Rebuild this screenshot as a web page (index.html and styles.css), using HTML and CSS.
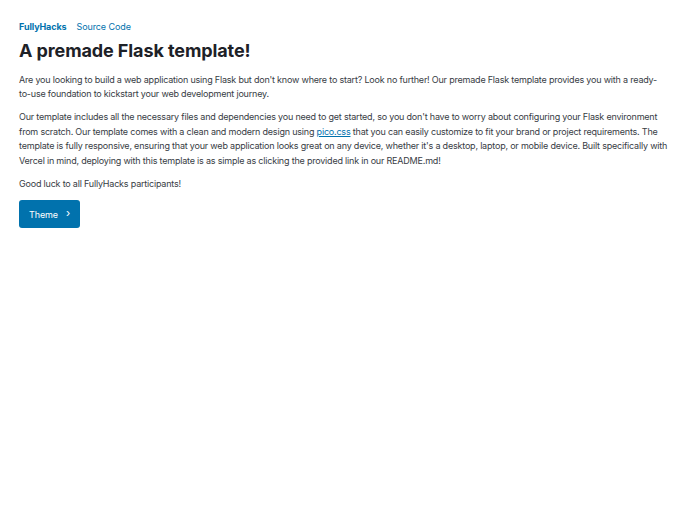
FILE: index.html
```html
<!DOCTYPE html>
<html lang="en">
<head>
<meta charset="utf-8">
<title>FullyHacks Flask Template</title>
<link rel="stylesheet" href="styles.css">
</head>
<body>
<main class="container">
  <nav class="nav">
    <a class="brand" href="#">FullyHacks</a>
    <a class="nav-link" href="#">Source Code</a>
  </nav>
  <h1 class="title">A premade Flask template!</h1>
  <p class="text">Are you looking to build a web application using Flask but don't know where to start? Look no further! Our premade Flask template provides you with a ready-<span class="nowrap">to-use</span> foundation to kickstart your web development journey.</p>
  <p class="text">Our template includes all the necessary files and dependencies you need to get started, so you don't have to worry about configuring your Flask environment from scratch. Our template comes with a clean and modern design using <a class="inline-link" href="#">pico.css</a> that you can easily customize to fit your brand or project requirements. The template is fully responsive, ensuring that your web application looks great on any device, whether it's a desktop, laptop, or mobile device. Built specifically with Vercel in mind, deploying with this template is as simple as clicking the provided link in our README.md!</p>
  <p class="text">Good luck to all FullyHacks participants!</p>
  <button class="btn" type="button">Theme <span class="chev">&#8250;</span></button>
</main>
</body>
</html>
```
FILE: styles.css
```css
html, body {
  margin: 0;
  padding: 0;
  background: #ffffff;
}
body {
  font-family: Inter, "Liberation Sans", sans-serif;
  color: #373c44;
}
.container {
  padding: 18px 19px 0 19px;
}
.nav {
  display: flex;
  gap: 10px;
  align-items: center;
  height: 16px;
  font-size: 9px;
  letter-spacing: -0.1px;
}
.nav a {
  text-decoration: none;
  color: #0172ad;
}
.brand {
  font-weight: 700;
}
.title {
  margin: 6px 0 0 0;
  font-size: 18px;
  font-weight: 700;
  line-height: 22px;
  color: #1d2127;
  letter-spacing: -0.1px;
}
.text {
  margin: 10.75px 0 0 0;
  font-size: 9px;
  line-height: 14.5px;
  letter-spacing: -0.2px;
}
.text + .text {
  margin-top: 8.5px;
}
.nowrap {
  white-space: nowrap;
}
.inline-link {
  color: #0172ad;
  text-decoration: underline;
}
.btn {
  margin-top: 9px;
  display: flex;
  align-items: center;
  gap: 8px;
  height: 28px;
  padding: 0 10px;
  border: 0;
  border-radius: 3px;
  background: #0172ad;
  color: #ffffff;
  font-family: Inter, "Liberation Sans", sans-serif;
  font-size: 9px;
  letter-spacing: -0.1px;
}
.chev {
  font-size: 11px;
  line-height: 1;
  margin-top: -2px;
}
```
